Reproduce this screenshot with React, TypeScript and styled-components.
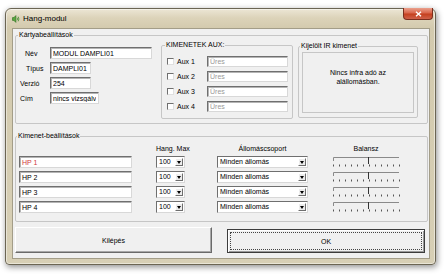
import React from "react";
import styled, { createGlobalStyle } from "styled-components";

/* global */
const GlobalStyle = createGlobalStyle`
  html, body { margin: 0; padding: 0; background: #ffffff; }
  body {
    width: 445px;
    height: 276px;
    overflow: hidden;
    font-family: "Liberation Sans", Arial, sans-serif;
    font-size: 7px;
    color: #000;
  }
  * { box-sizing: border-box; }
`;

/* frame */
const Desktop = styled.div`
  width: 445px;
  height: 276px;
  padding: 8px 0 0 5px;
`;

const Window = styled.div`
  width: 431px;
  height: 257px;
  display: flex;
  flex-direction: column;
  padding: 0 5px 5px 6px;
  border: 1px solid #6b6553;
  border-radius: 6px 6px 4px 4px;
  background: linear-gradient(180deg, #ece6d5 0px, #dcd3b9 9px, #d3caae 19px, #d7cfb5 100%);
  box-shadow: 1px 2px 6px rgba(0, 0, 0, 0.45), inset 0 0 0 1px rgba(255, 255, 255, 0.45);
`;

const TitleBar = styled.div`
  height: 19px;
  display: flex;
  align-items: center;
  gap: 3px;
  font-size: 8px;
`;

const CloseButton = styled.div`
  margin-left: auto;
  align-self: flex-start;
  margin-top: -1px;
  margin-right: -3px;
  width: 30px;
  height: 12px;
  display: flex;
  align-items: center;
  justify-content: center;
  border: 1px solid #7a2e1e;
  border-top: none;
  border-radius: 0 0 4px 4px;
  background: linear-gradient(180deg, #eaa18d 0%, #d9654b 45%, #c4401f 55%, #d0614a 100%);
`;

const Client = styled.div`
  flex: 1;
  display: flex;
  flex-direction: column;
  padding: 2px 1px 0 2px;
  background: #f0f0f0;
  border: 1px solid #a39d88;
`;

/* group boxes */
const Group = styled.fieldset<{ $pad: string; $w?: number; $top?: number }>`
  margin: ${(p) => p.$top ?? 0}px 0 0 0;
  min-width: 0;
  ${(p) => (p.$w ? `width: ${p.$w}px; flex: none;` : "")}
  padding: ${(p) => p.$pad};
  border: 1px solid #c6c6c6;
  border-radius: 2px;
`;

const GroupTitle = styled.legend`
  padding: 0 1px;
  margin-left: -2px;
  font-size: 7px;
  line-height: 8px;
`;

const CardRow = styled.div`
  display: flex;
  align-items: flex-start;
`;

const CardForm = styled.div`
  margin-top: 6px;
  display: grid;
  grid-template-columns: 30px auto;
  grid-auto-rows: 12px;
  row-gap: 3px;
  align-items: center;
  margin-right: 9px;
`;

const FieldLabel = styled.span<{ $indent?: number }>`
  padding-left: ${(p) => p.$indent ?? 0}px;
  white-space: nowrap;
`;

const TextBox = styled.input<{ $w: number; $h?: number; $tone?: "muted" | "alert" }>`
  width: ${(p) => p.$w}px;
  height: ${(p) => p.$h ?? 12}px;
  margin: 0;
  padding: 0 2px;
  font: inherit;
  font-size: 7px;
  color: ${(p) => (p.$tone === "muted" ? "#9a9a9a" : p.$tone === "alert" ? "#d03a3a" : "#000")};
  background: #fff;
  border: 1px solid;
  border-color: #6f6f6f #d8d8d8 #d8d8d8 #6f6f6f;
  box-shadow: inset 1px 1px 0 #b4b4b4;
  outline: none;
  overflow: hidden;
`;

const AuxList = styled.div`
  display: flex;
  flex-direction: column;
  gap: 4px;
`;

const AuxRow = styled.label`
  height: 11px;
  display: flex;
  align-items: center;
`;

const Check = styled.span`
  flex: none;
  width: 7px;
  height: 7px;
  margin-right: 3px;
  background: #fff;
  border: 1px solid;
  border-color: #6f6f6f #e0e0e0 #e0e0e0 #6f6f6f;
`;

const AuxName = styled.span`
  width: 30px;
`;

const IrPanel = styled.div`
  height: 61px;
  padding-top: 15px;
  border: 1px solid #c6c6c6;
  text-align: center;
  line-height: 9px;
`;

/* outputs */
const OutputGrid = styled.div`
  display: grid;
  grid-template-columns: 113px 53px 123px 92px;
  grid-template-rows: 10px repeat(4, 12px);
  row-gap: 3px;
  justify-items: end;
  align-items: center;
`;

const ColHead = styled.span<{ $w: number }>`
  width: ${(p) => p.$w}px;
  text-align: center;
  white-space: nowrap;
`;

const Combo = styled.div<{ $w: number }>`
  width: ${(p) => p.$w}px;
  height: 12px;
  display: flex;
  padding: 1px;
  background: #fff;
  border: 1px solid;
  border-color: #6f6f6f #d8d8d8 #d8d8d8 #6f6f6f;
`;

const ComboText = styled.span`
  flex: 1;
  padding-left: 1px;
  line-height: 8px;
  white-space: nowrap;
  overflow: hidden;
`;

const ComboArrow = styled.span`
  flex: none;
  width: 8px;
  display: flex;
  align-items: center;
  justify-content: center;
  background: #ececec;
  border: 1px solid;
  border-color: #ffffff #6e6e6e #6e6e6e #ffffff;
  &::after {
    content: "";
    border-left: 2px solid transparent;
    border-right: 2px solid transparent;
    border-top: 3px solid #000;
  }
`;

/* buttons */
const ButtonRow = styled.div`
  margin-top: 5px;
  display: flex;
  align-items: flex-end;
  gap: 15px;
`;

const DialogButton = styled.button<{ $w: number; $default?: boolean }>`
  width: ${(p) => p.$w}px;
  height: ${(p) => (p.$default ? 24 : 26)}px;
  padding: 0;
  font: inherit;
  font-size: 7px;
  color: #000;
  background: #f0f0f0;
  border: 1px solid;
  border-color: ${(p) => (p.$default ? "#3c3c3c" : "#ffffff #6a6a6a #6a6a6a #ffffff")};
  box-shadow: ${(p) =>
    p.$default ? "inset 1px 1px 0 #fff, inset -1px -1px 0 #9a9a9a" : "inset -1px -1px 0 #a8a8a8"};
  outline: ${(p) => (p.$default ? "1px dotted #444" : "none")};
  outline-offset: -4px;
`;

/* icons */
const SpeakerIcon = () => (
  <svg width="8" height="8" viewBox="0 0 8 8">
    <path d="M0.5 2.6h1.4l2-2v6.8l-2-2H0.5z" fill="#59a83f" stroke="#2e6b22" strokeWidth="0.6" />
    <path d="M5.1 2.7q.9 1.3 0 2.6M6.2 1.7q1.5 2.3 0 4.6" stroke="#3f8a2c" fill="none" strokeWidth="0.8" />
  </svg>
);

const CloseGlyph = () => (
  <svg width="7" height="6" viewBox="0 0 7 6">
    <path d="M1 0.8l5 4.4M6 0.8l-5 4.4" stroke="#fff" strokeWidth="1.4" />
  </svg>
);

const Balance = () => (
  <svg width="68" height="12" viewBox="0 0 68 12">
    <path d="M1.5 5V1.5H67" stroke="#8a8a8a" fill="none" />
    <path d="M36.5 1V8" stroke="#333" />
    {Array.from({ length: 12 }, (_, i) => (
      <path key={i} d={`M${1.5 + i * 6} 8.5V10.5`} stroke="#555" />
    ))}
  </svg>
);

/* data */
const card = [
  { label: "Név", indent: 5, value: "MODUL DAMPLI01", w: 102 },
  { label: "Típus", indent: 6, value: "DAMPLI01", w: 41 },
  { label: "Verzió", indent: 0, value: "254", w: 41 },
  { label: "Cím", indent: 0, value: "nincs vizsgálva", w: 49 },
];
const outputs = ["HP 1", "HP 2", "HP 3", "HP 4"];

/* DOM */
const App: React.FC = () => (
  <>
    <GlobalStyle />
    <Desktop>
      <Window>
        <TitleBar>
          <SpeakerIcon />
          <span>Hang-modul</span>
          <CloseButton><CloseGlyph /></CloseButton>
        </TitleBar>
        <Client>
          <Group $pad="2px 9px 4px 4px">
            <GroupTitle>Kártyabeállítások</GroupTitle>
            <CardRow>
              <CardForm>
                {card.map((c) => (
                  <React.Fragment key={c.label}>
                    <FieldLabel $indent={c.indent}>{c.label}</FieldLabel>
                    <TextBox $w={c.w} readOnly value={c.value} />
                  </React.Fragment>
                ))}
              </CardForm>
              <Group $w={132} $pad="7px 4px 6px 5px">
                <GroupTitle>KIMENETEK AUX:</GroupTitle>
                <AuxList>
                  {[1, 2, 3, 4].map((n) => (
                    <AuxRow key={n}>
                      <Check />
                      <AuxName>Aux {n}</AuxName>
                      <TextBox $w={81} $h={11} $tone="muted" readOnly value="Üres" />
                    </AuxRow>
                  ))}
                </AuxList>
              </Group>
              <Group $w={120} $top={1} $pad="2px 3px 4px 3px" style={{ marginLeft: 5 }}>
                <GroupTitle>Kijelölt IR kimenet</GroupTitle>
                <IrPanel>
                  Nincs infra adó az
                  <br />
                  alállomásban.
                </IrPanel>
              </Group>
            </CardRow>
          </Group>

          <Group $top={8} $pad="3px 0 8px 3px">
            <GroupTitle>Kimenet-beállítások</GroupTitle>
            <OutputGrid>
              <span />
              <ColHead $w={29}>Hang. Max</ColHead>
              <ColHead $w={91}>Állomáscsoport</ColHead>
              <ColHead $w={68}>Balansz</ColHead>
              {outputs.map((o, i) => (
                <React.Fragment key={o}>
                  <TextBox $w={113} $tone={i === 0 ? "alert" : undefined} readOnly value={o} />
                  <Combo $w={29}><ComboText>100</ComboText><ComboArrow /></Combo>
                  <Combo $w={91}><ComboText>Minden állomás</ComboText><ComboArrow /></Combo>
                  <Balance />
                </React.Fragment>
              ))}
            </OutputGrid>
          </Group>

          <ButtonRow>
            <DialogButton $w={197}>Kilépés</DialogButton>
            <DialogButton $w={198} $default>OK</DialogButton>
          </ButtonRow>
        </Client>
      </Window>
    </Desktop>
  </>
);

export default App;
